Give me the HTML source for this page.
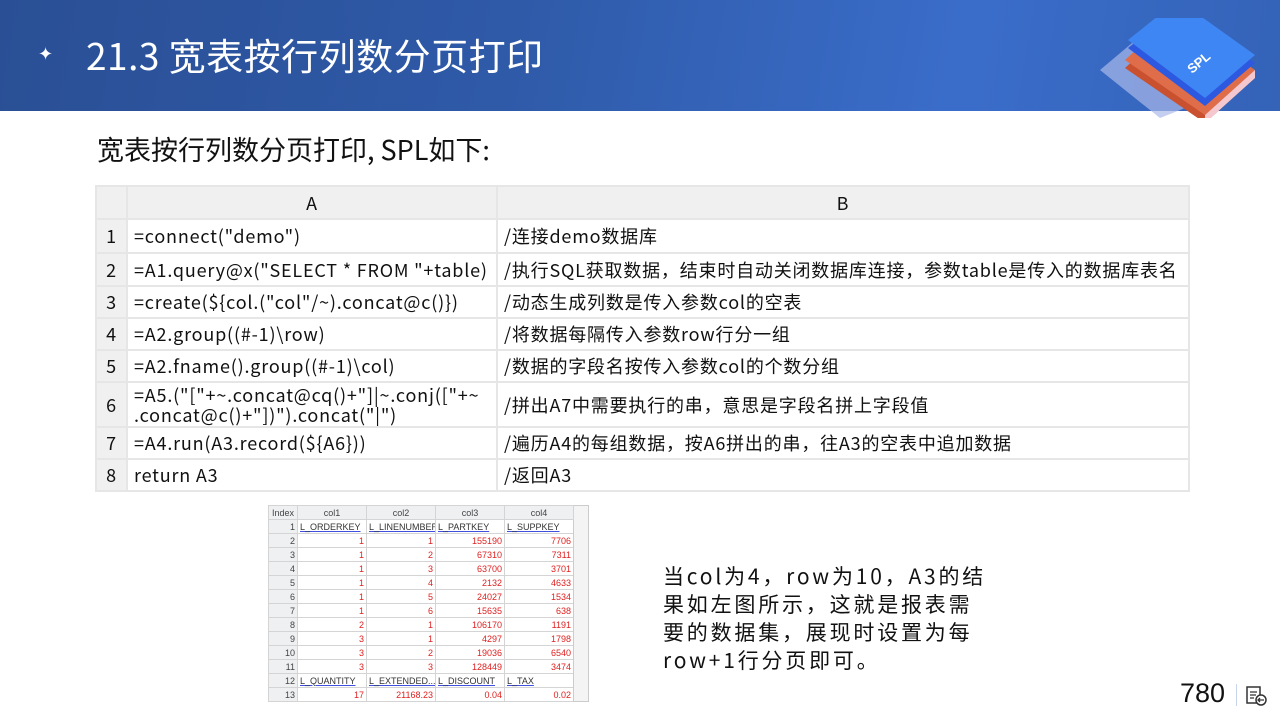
<!DOCTYPE html>
<html><head><meta charset="utf-8"><style>
*{margin:0;padding:0;box-sizing:border-box}
body{width:1280px;height:720px;overflow:hidden;background:#fff;font-family:"Liberation Sans","Noto Sans CJK SC",sans-serif;position:relative}
.hdr{position:absolute;left:0;top:0;width:1280px;height:111px;background:linear-gradient(100deg,#2a4f95 0%,#2f5aa8 40%,#3a6dca 75%,#3463b8 100%)}
.title{position:absolute;left:86px;top:27px;color:#fff;font-size:37px;font-family:"Noto Sans CJK SC",sans-serif;letter-spacing:0.5px}
.star{position:absolute;left:38px;top:44px;color:#fff;font-size:18px}
.sub{position:absolute;left:97px;top:129px;font-size:27px;font-family:"Noto Sans CJK SC",sans-serif;color:#111;letter-spacing:0}
table.c{position:absolute;left:95px;top:185px;width:1093px;table-layout:fixed;border-collapse:collapse;font-family:"Noto Sans CJK SC",sans-serif;font-size:18px;letter-spacing:0.8px;color:#111}
table.c td{border:2px solid #e6e6e6;padding:0 6px;white-space:nowrap;line-height:20px;overflow:hidden}
table.c tr.h td{background:#f0f0f0;text-align:center}
table.c td.n{background:#f0f0f0;text-align:center;padding:0}
.desc{position:absolute;left:663px;top:562px;font-size:21px;line-height:28px;font-family:"Noto Sans CJK SC",sans-serif;color:#111;width:340px;letter-spacing:2.8px}
table.s{position:absolute;left:268px;top:505px;width:320px;table-layout:fixed;border-collapse:collapse;font-size:9px;font-family:"Liberation Sans",sans-serif}
table.s td{border:1px solid #d4d4d4;height:14px;padding:0 2px;text-align:right;color:#e02020;white-space:nowrap;overflow:hidden}
table.s tr.h td{background:#eef0f2;color:#444;text-align:center}
table.s td.i{background:#eef0f2;color:#444}
table.s td.f{color:#333;text-align:left;text-decoration:underline;text-decoration-color:#4050e0}
.pg{position:absolute;left:1180px;top:678px;font-size:27px;color:#111}
</style></head><body>
<div class="hdr"></div>
<div class="star">✦</div>
<div class="title">21.3 宽表按行列数分页打印</div>
<svg style="position:absolute;left:1100px;top:18px" width="160" height="100" viewBox="0 0 160 100">
<polygon points="0,52 50,10 110,80 60,100" fill="#a9b9ea" opacity="0.7"/>
<polygon points="25,50 75,4 155,60 105,105" fill="#c9512f"/>
<polygon points="25,42 75,-4 155,52 105,97" fill="#e06d4a"/>
<polygon points="105,97 155,52 155,60 105,105" fill="#f5c8d0"/>
<polygon points="28,30 78,-10 155,45 105,88" fill="#2d58e0"/>
<polygon points="28,22 78,-18 155,37 105,80" fill="#3f86f5"/>
<text x="92" y="56" fill="#fff" font-size="13" font-weight="bold" transform="rotate(-40 92 56)">SPL</text>
</svg>
<div class="sub">宽表按行列数分页打印, SPL如下:</div>
<table class="c">
<colgroup><col style="width:31px"><col style="width:370px"><col style="width:692px"></colgroup>
<tr class="h" style="height:33px"><td></td><td>A</td><td>B</td></tr>
<tr style="height:34px"><td class="n">1</td><td>=connect("demo")</td><td>/连接demo数据库</td></tr>
<tr style="height:33px"><td class="n">2</td><td>=A1.query@x("SELECT * FROM "+table)</td><td>/执行SQL获取数据，结束时自动关闭数据库连接，参数table是传入的数据库表名</td></tr>
<tr style="height:32px"><td class="n">3</td><td>=create(${col.("col"/~).concat@c()})</td><td>/动态生成列数是传入参数col的空表</td></tr>
<tr style="height:32px"><td class="n">4</td><td>=A2.group((#-1)\row)</td><td>/将数据每隔传入参数row行分一组</td></tr>
<tr style="height:32px"><td class="n">5</td><td>=A2.fname().group((#-1)\col)</td><td>/数据的字段名按传入参数col的个数分组</td></tr>
<tr style="height:45px"><td class="n">6</td><td style="line-height:20px">=A5.("["+~.concat@cq()+"]|~.conj(["+~<br>.concat@c()+"])").concat("|")</td><td>/拼出A7中需要执行的串，意思是字段名拼上字段值</td></tr>
<tr style="height:32px"><td class="n">7</td><td>=A4.run(A3.record(${A6}))</td><td>/遍历A4的每组数据，按A6拼出的串，往A3的空表中追加数据</td></tr>
<tr style="height:32px"><td class="n">8</td><td>return A3</td><td>/返回A3</td></tr>
</table>
<table class="s">
<colgroup><col style="width:29px"><col style="width:69px"><col style="width:69px"><col style="width:69px"><col style="width:69px"><col style="width:15px"></colgroup>
<tr class="h"><td>Index</td><td>col1</td><td>col2</td><td>col3</td><td>col4</td><td rowspan="14" style="background:#f4f4f4;border-color:#ccc"></td></tr>
<tr><td class="i">1</td><td class="f">L_ORDERKEY</td><td class="f">L_LINENUMBER</td><td class="f">L_PARTKEY</td><td class="f">L_SUPPKEY</td></tr>
<tr><td class="i">2</td><td>1</td><td>1</td><td>155190</td><td>7706</td></tr>
<tr><td class="i">3</td><td>1</td><td>2</td><td>67310</td><td>7311</td></tr>
<tr><td class="i">4</td><td>1</td><td>3</td><td>63700</td><td>3701</td></tr>
<tr><td class="i">5</td><td>1</td><td>4</td><td>2132</td><td>4633</td></tr>
<tr><td class="i">6</td><td>1</td><td>5</td><td>24027</td><td>1534</td></tr>
<tr><td class="i">7</td><td>1</td><td>6</td><td>15635</td><td>638</td></tr>
<tr><td class="i">8</td><td>2</td><td>1</td><td>106170</td><td>1191</td></tr>
<tr><td class="i">9</td><td>3</td><td>1</td><td>4297</td><td>1798</td></tr>
<tr><td class="i">10</td><td>3</td><td>2</td><td>19036</td><td>6540</td></tr>
<tr><td class="i">11</td><td>3</td><td>3</td><td>128449</td><td>3474</td></tr>
<tr><td class="i">12</td><td class="f">L_QUANTITY</td><td class="f">L_EXTENDED...</td><td class="f">L_DISCOUNT</td><td class="f">L_TAX</td></tr>
<tr><td class="i">13</td><td>17</td><td>21168.23</td><td>0.04</td><td>0.02</td></tr>
</table>
<div class="desc">当col为4，row为10，A3的结<br>果如左图所示，这就是报表需<br>要的数据集，展现时设置为每<br>row+1行分页即可。</div>
<div class="pg">780</div>
<div style="position:absolute;left:1236px;top:684px;width:1px;height:22px;background:#c8d4ea"></div>
<svg style="position:absolute;left:1246px;top:686px" width="22" height="20" viewBox="0 0 22 20"><rect x="1" y="1" width="13" height="16" fill="none" stroke="#333" stroke-width="1.5"/><path d="M4 6h7M4 9h6M4 12h4" stroke="#333" stroke-width="1.3"/><circle cx="15" cy="14" r="5" fill="#fff" stroke="#333" stroke-width="1.5"/><path d="M18 14h-6M14 12l-2 2 2 2" stroke="#333" stroke-width="1.3" fill="none"/></svg>
</body></html>
